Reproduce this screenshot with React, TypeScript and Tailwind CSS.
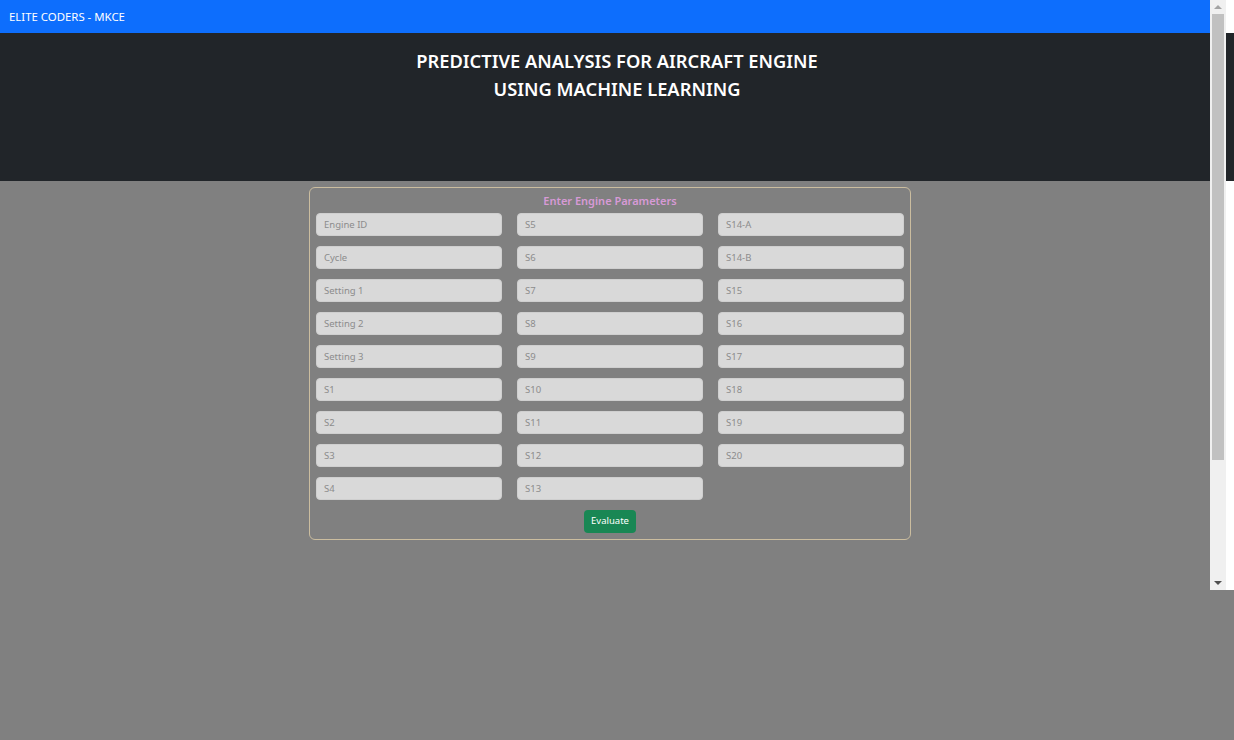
import React from 'react';

const COLUMNS: string[][] = [
  ['Engine ID', 'Cycle', 'Setting 1', 'Setting 2', 'Setting 3', 'S1', 'S2', 'S3', 'S4'],
  ['S5', 'S6', 'S7', 'S8', 'S9', 'S10', 'S11', 'S12', 'S13'],
  ['S14-A', 'S14-B', 'S15', 'S16', 'S17', 'S18', 'S19', 'S20'],
];

function Field({ label }: { label: string }) {
  return (
    <input
      type="text"
      placeholder={label}
      className="h-[23px] w-full rounded-[4px] border border-[#cfcfcf] bg-[#d9d9d9] px-[7px]
        text-[9.5px] text-[#333] placeholder:text-[#8c8c8c] outline-none"
    />
  );
}

export default function App() {
  return (
    <div
      className="relative min-h-[740px] w-[1234px] bg-[#808080]"
      style={{ fontFamily: '"Noto Sans", "Open Sans", sans-serif' }}
    >
      {/* top bar */}
      <div className="flex h-[33px] w-[1210px] items-center bg-[#0d6efd] px-[9px]">
        <span className="text-[11.4px] text-white">ELITE CODERS - MKCE</span>
      </div>

      {/* title band */}
      <div className="h-[148px] bg-[#212529] pt-[14px] text-center">
        <h1 className="text-[18.3px] font-semibold leading-[28px] text-white">
          PREDICTIVE ANALYSIS FOR AIRCRAFT ENGINE
          <br />
          USING MACHINE LEARNING
        </h1>
      </div>

      {/* form */}
      <div className="pt-[6px]">
        <form
          className="ml-[309px] w-[602px] rounded-[6px] border border-[#cbbd9f] px-[6px] pb-[6px]"
          onSubmit={(e) => e.preventDefault()}
        >
          <h2 className="h-[25px] pt-[6px] text-center text-[11px] font-semibold leading-[14px] text-[#d79ad6]">
            Enter Engine Parameters
          </h2>
          <div className="grid grid-cols-3 gap-x-[15px]">
            {COLUMNS.map((col, i) => (
              <div key={i} className="flex flex-col gap-[10px]">
                {col.map((label) => (
                  <Field key={label} label={label} />
                ))}
              </div>
            ))}
          </div>
          <div className="mt-[10px] flex justify-center">
            <button
              type="submit"
              className="h-[23px] w-[52px] rounded-[4px] bg-[#198754] text-[9.5px] text-white"
            >
              Evaluate
            </button>
          </div>
        </form>
      </div>

      {/* fake window scrollbar */}
      <div className="absolute left-[1210px] top-0 flex h-[590px] w-[16px] flex-col items-center bg-[#f0f0f0]">
        <div className="flex h-[14px] items-center justify-center">
          <div className="h-0 w-0 border-x-[4px] border-b-[4px] border-x-transparent border-b-[#a3a3a3]" />
        </div>
        <div className="h-[446px] w-[12px] bg-[#c1c1c1]" />
        <div className="flex-1" />
        <div className="flex h-[14px] items-center justify-center">
          <div className="h-0 w-0 border-x-[4px] border-t-[4px] border-x-transparent border-t-[#505050]" />
        </div>
      </div>
      <div className="absolute left-[1226px] top-0 h-[33px] w-[8px] bg-white" />
      <div className="absolute left-[1226px] top-[181px] h-[409px] w-[8px] bg-white" />
    </div>
  );
}
